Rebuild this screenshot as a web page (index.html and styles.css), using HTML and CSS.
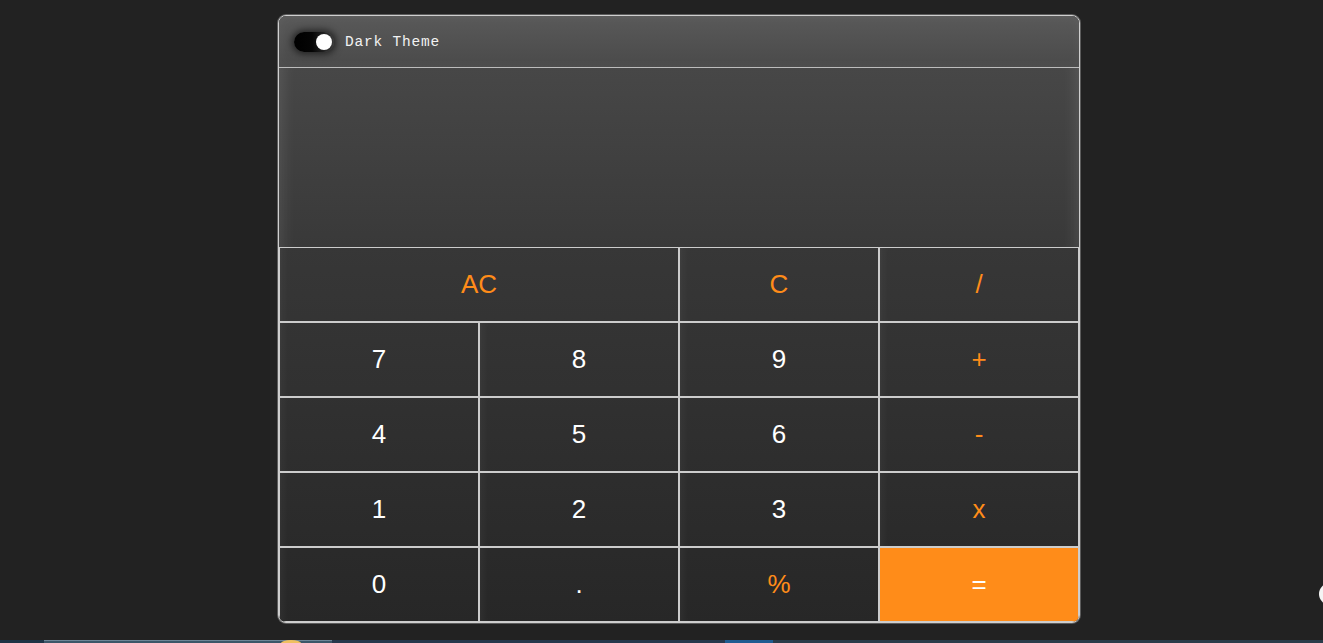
FILE: index.html
```html
<!DOCTYPE html>
<html lang="en">
<head>
<meta charset="utf-8">
<title>Calculator</title>
<link rel="stylesheet" href="styles.css">
</head>
<body>
<div class="page">
  <div class="calc">
    <div class="header">
      <div class="toggle"><span class="knob"></span></div>
      <span class="theme-label">Dark Theme</span>
    </div>
    <div class="display"></div>
    <div class="keys">
      <button class="key op span2">AC</button>
      <button class="key op">C</button>
      <button class="key op">/</button>
      <button class="key">7</button>
      <button class="key">8</button>
      <button class="key">9</button>
      <button class="key op">+</button>
      <button class="key">4</button>
      <button class="key">5</button>
      <button class="key">6</button>
      <button class="key op">-</button>
      <button class="key">1</button>
      <button class="key">2</button>
      <button class="key">3</button>
      <button class="key op">x</button>
      <button class="key">0</button>
      <button class="key">.</button>
      <button class="key op">%</button>
      <button class="key equals">=</button>
    </div>
  </div>
  <div class="edge-dot"></div>
</div>
<div class="taskbar">
  <div class="tb-start"></div>
  <div class="tb-search"><span class="tb-sun"></span></div>
  <div class="tb-gap"></div>
  <div class="tb-app"></div>
  <div class="tb-rest"></div>
</div>
</body>
</html>
```

FILE: styles.css
```css
html, body {
  margin: 0;
  padding: 0;
  background: #222222;
  height: 643px;
  overflow: hidden;
}

body {
  display: flex;
  flex-direction: column;
  font-family: "Liberation Sans", Arial, sans-serif;
}

.page {
  flex: 1;
  display: flex;
  justify-content: center;
  padding-top: 15px;
  padding-left: 35px;
  position: relative;
}

.calc {
  width: 800px;
  height: 606px;
  border: 1px solid #cfcfcf;
  border-radius: 8px;
  overflow: hidden;
  display: flex;
  flex-direction: column;
  background: #333;
  box-shadow: 0 0 0 1px rgba(200,200,200,0.35);
}

.header {
  height: 51px;
  border-bottom: 1px solid #bdbdbd;
  background: linear-gradient(to bottom, #595959, #4a4a4a);
  display: flex;
  align-items: center;
  padding-left: 15px;
  gap: 11px;
  box-shadow: inset 0 0 12px rgba(255,255,255,0.05);
}

.toggle {
  width: 40px;
  height: 20px;
  border-radius: 10px;
  background: linear-gradient(to right, #000 0%, #050505 45%, #3a3a3a 100%);
  box-shadow: 0 0 7px 2px rgba(0,0,0,0.6);
  display: flex;
  align-items: center;
  justify-content: flex-end;
  padding-right: 2px;
  box-sizing: border-box;
}

.knob {
  width: 16px;
  height: 16px;
  border-radius: 50%;
  background: #ffffff;
}

.theme-label {
  font-family: "Liberation Mono", "Courier New", monospace;
  font-size: 14.5px;
  letter-spacing: 0.8px;
  color: #f2f2f2;
  padding-top: 1px;
}

.display {
  height: 179px;
  background: linear-gradient(to bottom, #474747, #393939);
  box-shadow: inset 14px 0 14px -10px rgba(255,255,255,0.1), inset -14px 0 14px -10px rgba(255,255,255,0.1);
}

.keys {
  flex: 1;
  display: grid;
  grid-template-columns: repeat(4, 1fr);
  grid-template-rows: repeat(5, 1fr);
  background: linear-gradient(to bottom, #373737, #272727);
}

.key {
  border: 1px solid #cccccc;
  background: transparent;
  color: #ffffff;
  font-family: "Liberation Sans", Arial, sans-serif;
  font-size: 26px;
  margin: 0;
  padding: 0;
  display: flex;
  align-items: center;
  justify-content: center;
  box-shadow: inset 10px 0 12px -10px rgba(255,255,255,0.08);
}

.key.op {
  color: #ff8c19;
}

.key.span2 {
  grid-column: span 2;
}

.key.equals {
  background: #ff8c19;
  color: #ffffff;
  box-shadow: none;
}

.edge-dot {
  position: absolute;
  right: -18px;
  top: 583px;
  width: 22px;
  height: 22px;
  border-radius: 50%;
  background: #f4f4f4;
}

.taskbar {
  height: 3px;
  display: flex;
  background: #22384a;
}

.tb-start {
  width: 44px;
  background: #1e3446;
}

.tb-search {
  width: 288px;
  background: #3c5668;
  border-top: 1px solid #6d8597;
  box-sizing: border-box;
  position: relative;
}

.tb-sun {
  position: absolute;
  left: 237px;
  top: -1px;
  width: 20px;
  height: 6px;
  border-radius: 50% 50% 0 0;
  background: #f0c060;
}

.tb-gap {
  width: 393px;
  background: #26384c;
}

.tb-app {
  width: 48px;
  background: #1f5c91;
}

.tb-rest {
  flex: 1;
  background: #2a3c4a;
}
```
